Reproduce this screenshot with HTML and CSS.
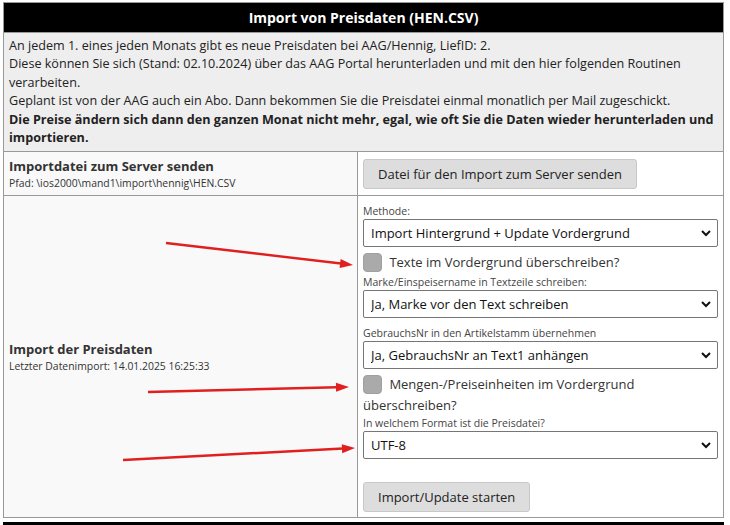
FILE: index.html
```html
<!DOCTYPE html>
<html lang="de">

<head>
    <meta charset="UTF-8">
    <title>Import von Preisdaten</title>
    <link rel="stylesheet" href="styles.css">
</head>

<body>

    <table class="import-table">
        <colgroup>
            <col class="col-label">
            <col>
        </colgroup>
        <thead>
            <tr>
                <th colspan="2">Import von Preisdaten (HEN.CSV)</th>
            </tr>
        </thead>
        <tbody>
            <!-- Hinweis -->
            <tr>
                <td colspan="2" class="info">
                    An jedem 1. eines jeden Monats gibt es neue Preisdaten bei AAG/Hennig, LiefID: 2.<br>
                    Diese können Sie sich (Stand: 02.10.2024) über das AAG Portal herunterladen und mit den hier folgenden Routinen verarbeiten.<br>
                    Geplant ist von der AAG auch ein Abo. Dann bekommen Sie die Preisdatei einmal monatlich per Mail zugeschickt.<br>
                    <b>Die Preise ändern sich dann den ganzen Monat nicht mehr, egal, wie oft Sie die Daten wieder herunterladen und importieren.</b>
                </td>
            </tr>

            <!-- Upload -->
            <tr>
                <td class="label-cell">
                    <div class="cell-title">Importdatei zum Server senden</div>
                    <div class="cell-sub">Pfad: \ios2000\mand1\import\hennig\HEN.CSV</div>
                </td>
                <td class="form-cell upload-cell">
                    <button class="btn">Datei für den Import zum Server senden</button>
                </td>
            </tr>

            <!-- Import -->
            <tr>
                <td class="label-cell">
                    <div class="cell-title">Import der Preisdaten</div>
                    <div class="cell-sub">Letzter Datenimport: 14.01.2025 16:25:33</div>
                </td>
                <td class="form-cell">
                    <label class="field-label">Methode:</label>
                    <div class="select-wrap">
                        <select>
                            <option>Import Hintergrund + Update Vordergrund</option>
                        </select>
                        <svg class="chevron" width="10" height="7" viewBox="0 0 10 7"><polyline points="1,1 5,5 9,1" fill="none" stroke="#111" stroke-width="2"/></svg>
                    </div>

                    <label class="check"><input type="checkbox"> Texte im Vordergrund überschreiben?</label>

                    <label class="field-label">Marke/Einspeisername in Textzeile schreiben:</label>
                    <div class="select-wrap">
                        <select>
                            <option>Ja, Marke vor den Text schreiben</option>
                        </select>
                        <svg class="chevron" width="10" height="7" viewBox="0 0 10 7"><polyline points="1,1 5,5 9,1" fill="none" stroke="#111" stroke-width="2"/></svg>
                    </div>

                    <label class="field-label spaced">GebrauchsNr in den Artikelstamm übernehmen</label>
                    <div class="select-wrap">
                        <select>
                            <option>Ja, GebrauchsNr an Text1 anhängen</option>
                        </select>
                        <svg class="chevron" width="10" height="7" viewBox="0 0 10 7"><polyline points="1,1 5,5 9,1" fill="none" stroke="#111" stroke-width="2"/></svg>
                    </div>

                    <label class="check check-last"><input type="checkbox"> Mengen-/Preiseinheiten im Vordergrund überschreiben?</label>

                    <label class="field-label">In welchem Format ist die Preisdatei?</label>
                    <div class="select-wrap">
                        <select>
                            <option>UTF-8</option>
                        </select>
                        <svg class="chevron" width="10" height="7" viewBox="0 0 10 7"><polyline points="1,1 5,5 9,1" fill="none" stroke="#111" stroke-width="2"/></svg>
                    </div>

                    <button class="btn start-btn">Import/Update starten</button>
                </td>
            </tr>
        </tbody>
    </table>

    <div class="next-bar"></div>

    <!-- Markierungen (Screenshot-Pfeile) -->
    <svg class="arrows" width="730" height="525" viewBox="0 0 730 525">
        <g stroke="#e21f1f" stroke-width="2.5" fill="#e21f1f">
            <line x1="166" y1="243" x2="341" y2="263.6"/>
            <polygon points="353,265 339.6,268 340.6,259" stroke="none"/>
            <line x1="148" y1="392" x2="337" y2="387.3"/>
            <polygon points="349,387 336.1,391.8 335.9,382.8" stroke="none"/>
            <line x1="123" y1="460" x2="343" y2="448.6"/>
            <polygon points="355,448 342.2,453.2 341.8,444.2" stroke="none"/>
        </g>
    </svg>

</body>

</html>
```

FILE: styles.css
```css
body {
    font-family: "Open Sans", Arial, sans-serif;
    margin: 0;
    padding: 2px 0 0 3px;
    background: #fff;
    color: #222;
    position: relative;
    overflow: hidden;
}

.import-table {
    width: 721px;
    border-collapse: collapse;
    border: 1px solid #999;
    table-layout: fixed;
}

.col-label {
    width: 354px;
}

.import-table th {
    background: #000;
    color: #fff;
    font-size: 14px;
    font-weight: bold;
    height: 29px;
    padding: 0;
    text-align: center;
}

.import-table td {
    border: 1px solid #999;
    vertical-align: middle;
}

.info {
    background: #eee;
    font-size: 12.6px;
    line-height: 18.4px;
    padding: 4px 5px;
}

.label-cell {
    background: #f9f9f9;
    padding: 5px 6px 5px 5px;
}

.cell-title {
    font-size: 13px;
    font-weight: bold;
    line-height: 19px;
    color: #333;
}

.cell-sub {
    font-size: 10.4px;
    line-height: 14px;
    color: #333;
}

.form-cell {
    background: #fff;
    padding: 8px 5px 5px 5px;
}

.upload-cell {
    padding-top: 6px;
    padding-bottom: 5px;
}

.btn {
    font-family: "Open Sans", Arial, sans-serif;
    font-size: 13px;
    color: #222;
    background: #ddd;
    border: 1px solid #c8c8c8;
    border-radius: 3px;
    height: 30px;
    padding: 0 14px;
}

.start-btn {
    display: block;
    margin-top: 23px;
}

.field-label {
    display: block;
    font-size: 10.5px;
    line-height: 14px;
    color: #444;
    margin-bottom: 1px;
}

.field-label.spaced {
    margin-top: 8px;
}

.select-wrap {
    position: relative;
}

.select-wrap select {
    appearance: none;
    -webkit-appearance: none;
    width: 100%;
    height: 28px;
    border: 1px solid #767676;
    border-radius: 2px;
    background: #fff;
    font-family: "Open Sans", Arial, sans-serif;
    font-size: 13px;
    color: #111;
    padding: 0 7px;
}

.chevron {
    position: absolute;
    right: 7px;
    top: 11px;
    pointer-events: none;
}

.check {
    display: block;
    font-size: 13px;
    line-height: 21px;
    color: #333;
    margin: 5px 0 2px;
}

.check-last {
    margin-bottom: 0;
}

.check input {
    appearance: none;
    -webkit-appearance: none;
    width: 19px;
    height: 19px;
    margin: 0 4px 0 0;
    background: #aaa;
    border: 1px solid #a0a0a0;
    border-radius: 4px;
    vertical-align: -5px;
}

.next-bar {
    background: #000;
    height: 10px;
    width: 721px;
    margin-top: 4px;
}

.arrows {
    position: absolute;
    top: 0;
    left: 0;
    pointer-events: none;
}
```
